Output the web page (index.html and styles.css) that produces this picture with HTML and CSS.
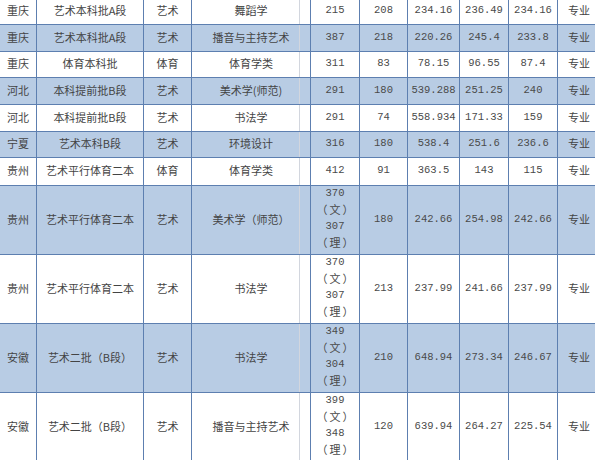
FILE: index.html
```html
<!DOCTYPE html>
<html lang="zh">
<head>
<meta charset="utf-8">
<link rel="stylesheet" href="styles.css">
</head>
<body>
<table class="score-table">
  <colgroup>
    <col class="c1"><col class="c2"><col class="c3"><col class="c4"><col class="c5">
    <col class="c6"><col class="c7"><col class="c8"><col class="c9"><col class="c10">
  </colgroup>
  <tbody>
    <tr class="r27">
      <td>重庆</td><td>艺术本科批A段</td><td>艺术</td><td class="major">舞蹈学</td>
      <td class="num">215</td><td class="num">208</td><td class="num">234.16</td><td class="num">236.49</td><td class="num">234.16</td><td>专业</td>
    </tr>
    <tr class="r27 alt">
      <td>重庆</td><td>艺术本科批A段</td><td>艺术</td><td class="major">播音与主持艺术</td>
      <td class="num">387</td><td class="num">218</td><td class="num">220.26</td><td class="num">245.4</td><td class="num">233.8</td><td>专业</td>
    </tr>
    <tr class="r26">
      <td>重庆</td><td>体育本科批</td><td>体育</td><td class="major">体育学类</td>
      <td class="num">311</td><td class="num">83</td><td class="num">78.15</td><td class="num">96.55</td><td class="num">87.4</td><td>专业</td>
    </tr>
    <tr class="r27 alt">
      <td>河北</td><td>本科提前批B段</td><td>艺术</td><td class="major">美术学(师范)</td>
      <td class="num">291</td><td class="num">180</td><td class="num">539.288</td><td class="num">251.25</td><td class="num">240</td><td>专业</td>
    </tr>
    <tr class="r27">
      <td>河北</td><td>本科提前批B段</td><td>艺术</td><td class="major">书法学</td>
      <td class="num">291</td><td class="num">74</td><td class="num">558.934</td><td class="num">171.33</td><td class="num">159</td><td>专业</td>
    </tr>
    <tr class="r26 alt">
      <td>宁夏</td><td>艺术本科B段</td><td>艺术</td><td class="major">环境设计</td>
      <td class="num">316</td><td class="num">180</td><td class="num">538.4</td><td class="num">251.6</td><td class="num">236.6</td><td>专业</td>
    </tr>
    <tr class="r28">
      <td>贵州</td><td>艺术平行体育二本</td><td>体育</td><td class="major">体育学类</td>
      <td class="num">412</td><td class="num">91</td><td class="num">363.5</td><td class="num">143</td><td class="num">115</td><td>专业</td>
    </tr>
    <tr class="tall alt">
      <td>贵州</td><td>艺术平行体育二本</td><td>艺术</td><td class="major">美术学（师范）</td>
      <td class="num stack">370<br><span class="cjk">（文）</span><br>307<br><span class="cjk">（理）</span></td>
      <td class="num">180</td><td class="num">242.66</td><td class="num">254.98</td><td class="num">242.66</td><td>专业</td>
    </tr>
    <tr class="tall">
      <td>贵州</td><td>艺术平行体育二本</td><td>艺术</td><td class="major">书法学</td>
      <td class="num stack">370<br><span class="cjk">（文）</span><br>307<br><span class="cjk">（理）</span></td>
      <td class="num">213</td><td class="num">237.99</td><td class="num">241.66</td><td class="num">237.99</td><td>专业</td>
    </tr>
    <tr class="tall alt">
      <td>安徽</td><td>艺术二批（B段）</td><td>艺术</td><td class="major">书法学</td>
      <td class="num stack">349<br><span class="cjk">（文）</span><br>304<br><span class="cjk">（理）</span></td>
      <td class="num">210</td><td class="num">648.94</td><td class="num">273.34</td><td class="num">246.67</td><td>专业</td>
    </tr>
    <tr class="tall">
      <td>安徽</td><td>艺术二批（B段）</td><td>艺术</td><td class="major">播音与主持艺术</td>
      <td class="num stack">399<br><span class="cjk">（文）</span><br>348<br><span class="cjk">（理）</span></td>
      <td class="num">120</td><td class="num">639.94</td><td class="num">264.27</td><td class="num">225.54</td><td>专业</td>
    </tr>
  </tbody>
</table>
</body>
</html>
```

FILE: styles.css
```css
html, body {
  margin: 0;
  padding: 0;
  background: #ffffff;
  overflow: hidden;
}

.score-table {
  margin-top: -2px;
  border-collapse: separate;
  border-spacing: 0;
  table-layout: fixed;
  width: 601px;
  font-family: "Noto Sans CJK SC", "Noto Sans", sans-serif;
  font-size: 11px;
  color: #444444;
}

.c1 { width: 37px; }
.c2 { width: 107px; }
.c3 { width: 48px; }
.c4 { width: 119px; }
.c5 { width: 49px; }
.c6 { width: 48px; }
.c7 { width: 52px; }
.c8 { width: 49px; }
.c9 { width: 49px; }
.c10 { width: 43px; }

.score-table td {
  box-sizing: border-box;
  padding: 0;
  text-align: center;
  vertical-align: middle;
  border-right: 1px solid #5d7fb0;
  border-bottom: 1px solid #5d7fb0;
  white-space: nowrap;
  line-height: 14px;
  padding-bottom: 3px;
}

.score-table tr.alt td {
  background-color: #b8cce4;
}

.r26 td { height: 26px; }
.r27 td { height: 27px; }
.r28 td { height: 28px; }
.tall td { height: 69px; }

.score-table td.major {
  background-image: linear-gradient(#d2d6de, #d2d6de);
  background-size: 1px 100%;
  background-position: right 10px top;
  background-repeat: no-repeat;
}

.score-table td.num {
  font-family: "Liberation Mono", "Courier New", monospace;
  font-size: 10.5px;
  color: #4a4a4a;
}

.score-table td.stack {
  line-height: 15.5px;
  padding-bottom: 2px;
}

.cjk {
  font-family: "Noto Sans CJK SC", sans-serif;
  font-size: 11px;
  letter-spacing: 2px;
  padding-left: 2px;
}
```
